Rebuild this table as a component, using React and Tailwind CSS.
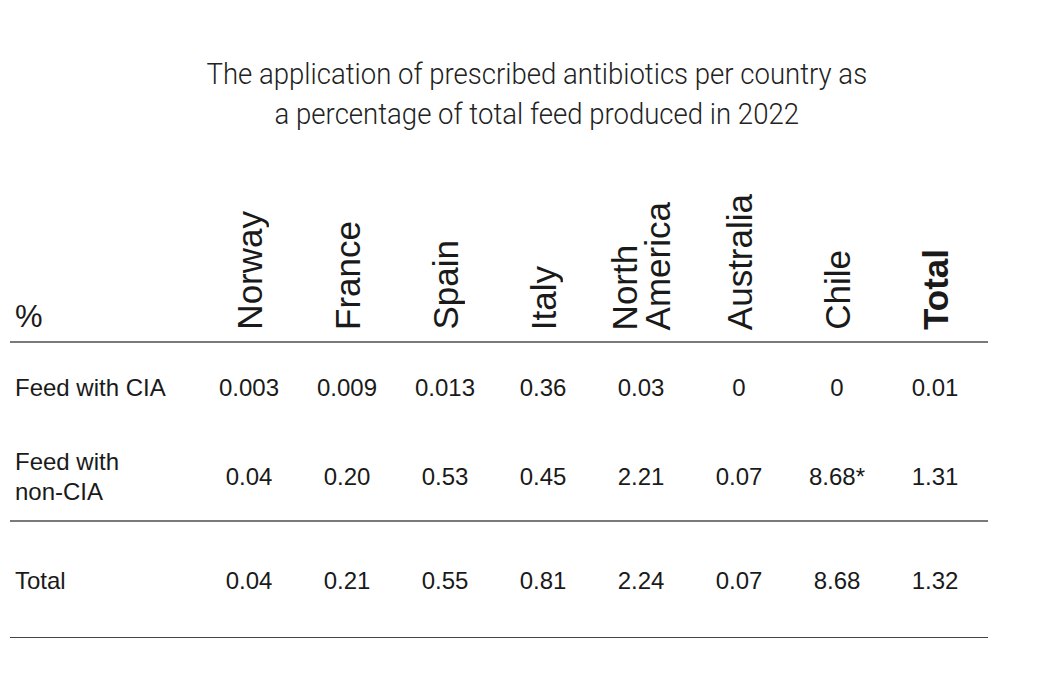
const countries = [
  { name: ["Norway"] },
  { name: ["France"] },
  { name: ["Spain"] },
  { name: ["Italy"] },
  { name: ["North", "America"] },
  { name: ["Australia"] },
  { name: ["Chile"] },
  { name: ["Total"], bold: true },
];

const rows = [
  {
    label: ["Feed with CIA"],
    values: ["0.003", "0.009", "0.013", "0.36", "0.03", "0", "0", "0.01"],
    className: "h-[90px]",
  },
  {
    label: ["Feed with", "non-CIA"],
    values: ["0.04", "0.20", "0.53", "0.45", "2.21", "0.07", "8.68*", "1.31"],
    className: "h-[89px] border-b-2 border-[#7a7a7a]",
  },
  {
    label: ["Total"],
    values: ["0.04", "0.21", "0.55", "0.81", "2.24", "0.07", "8.68", "1.32"],
    className: "h-[116px] pt-[3px] border-b border-[#444]",
  },
];

const App = () => {
  return (
    <div className="w-[1050px] h-[700px] bg-white text-[#1a1a1a] font-['Liberation_Sans',Arial,sans-serif]">
      <div className="pt-[54px] flex justify-center pl-[24px]">
        <h1 className="scale-x-[0.918] text-center text-[30px] leading-[40px] font-light whitespace-nowrap text-[#222] font-['Roboto',sans-serif]">
          The application of prescribed antibiotics per country as
          <br />
          a percentage of total feed produced in 2022
        </h1>
      </div>

      <div className="ml-[10px] w-[978px]">
        <div className="flex h-[209px] border-b-2 border-[#7a7a7a]">
          <div className="w-[190px] flex items-end pl-[5px] pb-[6px] text-[31px] leading-[36px]">
            %
          </div>
          {countries.map((c) => (
            <div key={c.name.join(" ")} className="w-[98px] flex items-end justify-center pb-[11px]">
              <div
                className={
                  "[writing-mode:vertical-rl] rotate-180 text-[35px] leading-[33px] whitespace-nowrap " +
                  (c.bold ? "font-bold" : "font-normal")
                }
              >
                {c.name.map((line, i) => (
                  <span key={i} className="block">
                    {line}
                  </span>
                ))}
              </div>
            </div>
          ))}
        </div>

        {rows.map((row) => (
          <div key={row.label.join(" ")} className={"flex items-center text-[24px] " + row.className}>
            <div className="w-[190px] pl-[5px] leading-[30px]">
              {row.label.map((line, i) => (
                <div key={i}>{line}</div>
              ))}
            </div>
            {row.values.map((v, i) => (
              <div key={i} className="w-[98px] text-center">
                {v}
              </div>
            ))}
          </div>
        ))}
      </div>
    </div>
  );
};

export default App;
